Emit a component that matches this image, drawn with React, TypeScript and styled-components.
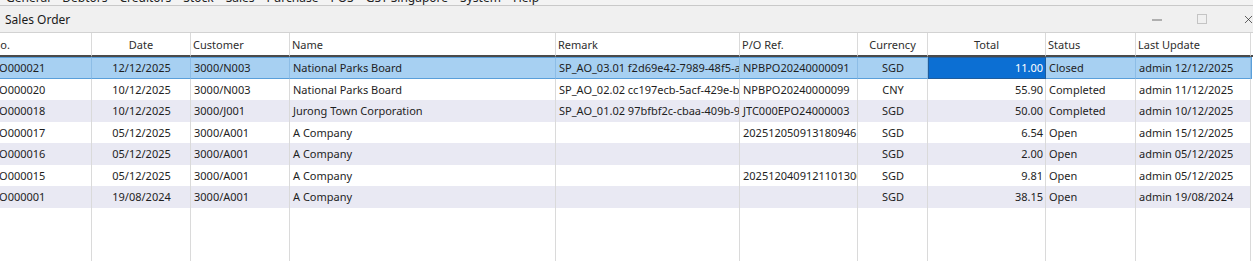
import React from 'react';
import styled, { createGlobalStyle } from 'styled-components';
import { X } from 'lucide-react';

const GlobalStyle = createGlobalStyle`
  html, body {
    margin: 0;
    padding: 0;
    background: #ffffff;
    overflow: hidden;
  }
  body {
    font-family: "Noto Sans", "Liberation Sans", sans-serif;
    color: #1e1e1e;
  }
`;

interface Column {
  key: string;
  title: string;
  width: number;
  align: 'left' | 'center' | 'right';
  headAlign?: 'left' | 'center' | 'right';
}

interface OrderRow {
  no: string;
  date: string;
  customer: string;
  name: string;
  remark: string;
  po: string;
  currency: string;
  total: string;
  status: string;
  update: string;
}

const columns: Column[] = [
  { key: 'no', title: 'No.', width: 102, align: 'left' },
  { key: 'date', title: 'Date', width: 99, align: 'center' },
  { key: 'customer', title: 'Customer', width: 99, align: 'left' },
  { key: 'name', title: 'Name', width: 266, align: 'left' },
  { key: 'remark', title: 'Remark', width: 184, align: 'left' },
  { key: 'po', title: 'P/O Ref.', width: 118, align: 'left' },
  { key: 'currency', title: 'Currency', width: 70, align: 'center' },
  { key: 'total', title: 'Total', width: 118, align: 'right', headAlign: 'center' },
  { key: 'status', title: 'Status', width: 90, align: 'left' },
  { key: 'update', title: 'Last Update', width: 115, align: 'left' },
];

const orders: OrderRow[] = [
  { no: 'SO000021', date: '12/12/2025', customer: '3000/N003', name: 'National Parks Board', remark: 'SP_AO_03.01 f2d69e42-7989-48f5-aa3c', po: 'NPBPO20240000091', currency: 'SGD', total: '11.00', status: 'Closed', update: 'admin 12/12/2025' },
  { no: 'SO000020', date: '10/12/2025', customer: '3000/N003', name: 'National Parks Board', remark: 'SP_AO_02.02 cc197ecb-5acf-429e-bc11', po: 'NPBPO20240000099', currency: 'CNY', total: '55.90', status: 'Completed', update: 'admin 11/12/2025' },
  { no: 'SO000018', date: '10/12/2025', customer: '3000/J001', name: 'Jurong Town Corporation', remark: 'SP_AO_01.02 97bfbf2c-cbaa-409b-9c2e', po: 'JTC000EPO24000003', currency: 'SGD', total: '50.00', status: 'Completed', update: 'admin 10/12/2025' },
  { no: 'SO000017', date: '05/12/2025', customer: '3000/A001', name: 'A Company', remark: '', po: '20251205091318094617', currency: 'SGD', total: '6.54', status: 'Open', update: 'admin 15/12/2025' },
  { no: 'SO000016', date: '05/12/2025', customer: '3000/A001', name: 'A Company', remark: '', po: '', currency: 'SGD', total: '2.00', status: 'Open', update: 'admin 05/12/2025' },
  { no: 'SO000015', date: '05/12/2025', customer: '3000/A001', name: 'A Company', remark: '', po: '20251204091211013060', currency: 'SGD', total: '9.81', status: 'Open', update: 'admin 05/12/2025' },
  { no: 'SO000001', date: '19/08/2024', customer: '3000/A001', name: 'A Company', remark: '', po: '', currency: 'SGD', total: '38.15', status: 'Open', update: 'admin 19/08/2024' },
];

const menuItems = ['General', 'Debtors', 'Creditors', 'Stock', 'Sales', 'Purchase', 'POS', 'GST Singapore', 'System', 'Help'];

const gridTemplate = columns.map((c) => `${c.width}px`).join(' ') + ' 1fr';

const Page = styled.div`
  width: 100%;
  height: 261px;
  display: flex;
  flex-direction: column;
  overflow: hidden;
  background: #ffffff;
`;

const MenuBar = styled.div`
  height: 5px;
  overflow: hidden;
  background: #f3f3f3;
  border-bottom: 1px solid #c9c9c9;
`;

const MenuStrip = styled.div`
  display: flex;
  gap: 12px;
  padding-left: 6px;
  margin-top: -9px;
  font-size: 12px;
  line-height: 14px;
  color: #222;
`;

const TitleBar = styled.div`
  height: 26px;
  display: flex;
  align-items: center;
  justify-content: space-between;
  background: #f0f0f0;
  border-bottom: 1px solid #d2d2d2;
  padding-left: 5px;
  font-size: 12px;
  color: #1a1a1a;
`;

const WindowButtons = styled.div`
  display: flex;
  align-items: center;
  gap: 34px;
  margin-right: -2px;
  svg {
    display: block;
    flex-shrink: 0;
  }
`;

const Viewport = styled.div`
  flex: 1;
  overflow: hidden;
`;

const Grid = styled.div`
  margin-left: -10px;
  display: grid;
  grid-template-columns: ${gridTemplate};
  grid-template-rows: 24px repeat(${orders.length}, 21.5px) 1fr;
  height: 100%;
  font-size: 11px;
`;

const HeadCell = styled.div<{ $align: string; $last?: boolean }>`
  display: flex;
  align-items: center;
  justify-content: ${(p) => (p.$align === 'center' ? 'center' : p.$align === 'right' ? 'flex-end' : 'flex-start')};
  padding: 0 2px;
  background: #ffffff;
  border-right: ${(p) => (p.$last ? 'none' : '1px solid #dadada')};
  border-bottom: 2px solid #4a4a4a;
  color: #2e2e2e;
  white-space: nowrap;
  overflow: hidden;
`;

const Cell = styled.div<{ $align: string; $stripe: boolean; $selected: boolean; $focus?: boolean }>`
  display: flex;
  align-items: center;
  justify-content: ${(p) => (p.$align === 'center' ? 'center' : p.$align === 'right' ? 'flex-end' : 'flex-start')};
  padding: 0 2px 0 3px;
  white-space: nowrap;
  overflow: hidden;
  box-sizing: border-box;
  background: ${(p) => (p.$focus ? '#0c6fd3' : p.$selected ? '#a7d0f2' : p.$stripe ? '#e9e9f3' : '#ffffff')};
  color: ${(p) => (p.$focus ? '#ffffff' : '#1e1e1e')};
  border-right: 1px solid ${(p) => (p.$selected ? '#8dbde6' : '#dadada')};
  border-top: ${(p) => (p.$selected ? '1px solid #5a9fda' : 'none')};
  border-bottom: ${(p) => (p.$selected ? '1px solid #5a9fda' : 'none')};
  ${(p) => (p.$focus ? 'outline: 1px solid #1f5c9c; outline-offset: -1px;' : '')}
`;

const EndCell = styled.div<{ $selected: boolean }>`
  background: #ffffff;
  border-left: ${(p) => (p.$selected ? '1px solid #5a9fda' : 'none')};
`;

const FillCell = styled.div`
  border-right: 1px solid #dadada;
`;

const Minimize = () => (
  <svg width="11" height="11" viewBox="0 0 11 11">
    <line x1="0" y1="6" x2="10" y2="6" stroke="#6e6e6e" strokeWidth="1" />
  </svg>
);

const Maximize = () => (
  <svg width="11" height="11" viewBox="0 0 11 11">
    <rect x="0.5" y="0.5" width="9" height="9" fill="none" stroke="#c4c4c4" strokeWidth="1" />
  </svg>
);

const App: React.FC = () => {
  const selected = 0;
  return (
    <Page>
      <GlobalStyle />
      <MenuBar>
        <MenuStrip>
          {menuItems.map((m) => (
            <span key={m}>{m}</span>
          ))}
        </MenuStrip>
      </MenuBar>
      <TitleBar>
        <span>Sales Order</span>
        <WindowButtons>
          <Minimize />
          <Maximize />
          <X size={13} strokeWidth={1.3} color="#222" />
        </WindowButtons>
      </TitleBar>
      <Viewport>
        <Grid>
          {columns.map((c) => (
            <HeadCell key={c.key} $align={c.headAlign ?? c.align}>
              {c.title}
            </HeadCell>
          ))}
          <HeadCell $align="left" $last />
          {orders.map((o, i) => {
            const stripe = i % 2 === 0;
            const isSel = i === selected;
            return (
              <React.Fragment key={o.no}>
                {columns.map((c) => (
                  <Cell
                    key={c.key}
                    $align={c.align}
                    $stripe={stripe}
                    $selected={isSel}
                    $focus={isSel && c.key === 'total'}
                  >
                    {o[c.key as keyof OrderRow]}
                  </Cell>
                ))}
                <EndCell $selected={isSel} />
              </React.Fragment>
            );
          })}
          {columns.map((c) => (
            <FillCell key={`fill-${c.key}`} />
          ))}
        </Grid>
      </Viewport>
    </Page>
  );
};

export default App;
